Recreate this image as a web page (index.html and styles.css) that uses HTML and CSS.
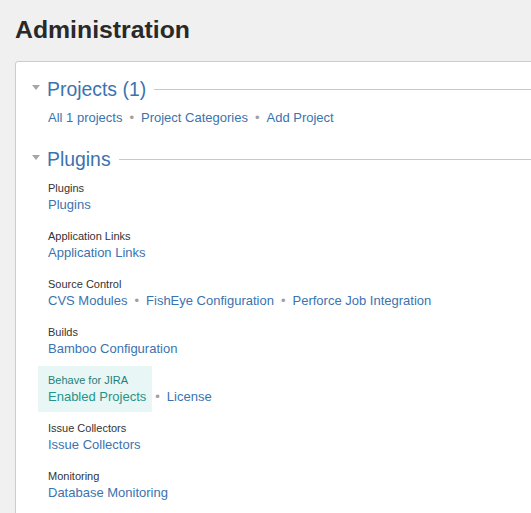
FILE: index.html
```html
<!DOCTYPE html>
<html lang="en">
<head>
<meta charset="utf-8">
<title>Administration</title>
<link rel="stylesheet" href="styles.css">
</head>
<body>
<h1 class="page-title">Administration</h1>
<div class="panel">
  <section class="admin-section">
    <h2 class="section-head"><span class="twisty"></span><span class="section-title">Projects (1)</span><span class="rule"></span></h2>
    <div class="link-row projects-links">
      <a class="link" href="#">All 1 projects</a><span class="sep">•</span><a class="link" href="#">Project Categories</a><span class="sep">•</span><a class="link" href="#">Add Project</a>
    </div>
  </section>
  <section class="admin-section plugins-section">
    <h2 class="section-head"><span class="twisty"></span><span class="section-title">Plugins</span><span class="rule"></span></h2>
    <div class="groups">
      <div class="group">
        <div class="group-main"><div class="group-label">Plugins</div><a class="link" href="#">Plugins</a></div>
      </div>
      <div class="group">
        <div class="group-main"><div class="group-label">Application Links</div><a class="link" href="#">Application Links</a></div>
      </div>
      <div class="group">
        <div class="group-main"><div class="group-label">Source Control</div><a class="link" href="#">CVS Modules</a></div>
        <div class="group-rest"><span class="sep">•</span><a class="link" href="#">FishEye Configuration</a><span class="sep">•</span><a class="link" href="#">Perforce Job Integration</a></div>
      </div>
      <div class="group">
        <div class="group-main"><div class="group-label">Builds</div><a class="link" href="#">Bamboo Configuration</a></div>
      </div>
      <div class="group">
        <div class="group-main hl"><div class="group-label">Behave for JIRA</div><a class="link" href="#">Enabled Projects</a></div>
        <div class="group-rest"><span class="sep">•</span><a class="link" href="#">License</a></div>
      </div>
      <div class="group">
        <div class="group-main"><div class="group-label">Issue Collectors</div><a class="link" href="#">Issue Collectors</a></div>
      </div>
      <div class="group">
        <div class="group-main"><div class="group-label">Monitoring</div><a class="link" href="#">Database Monitoring</a></div>
      </div>
    </div>
  </section>
</div>
</body>
</html>
```
FILE: styles.css
```css
html, body {
  margin: 0;
  padding: 0;
  overflow: hidden;
}
body {
  background: #f0f0f0;
  font-family: "Liberation Sans", Arial, sans-serif;
  color: #333;
  padding: 0 15px;
  height: 513px;
}
.page-title {
  margin: 0 0 16px 0;
  padding-top: 15px;
  font-size: 24.8px;
  line-height: 30px;
  font-weight: bold;
  color: #292929;
}
.panel {
  background: #fff;
  border: 1px solid #ccc;
  border-radius: 3px;
  margin-right: -60px;
  padding: 16px 16px 40px 16px;
}
.section-head {
  display: flex;
  align-items: center;
  margin: 0;
  height: 23px;
  font-size: 19.4px;
  line-height: 23px;
  font-weight: normal;
}
.twisty {
  width: 0;
  height: 0;
  border-left: 4.5px solid transparent;
  border-right: 4.5px solid transparent;
  border-top: 5px solid #a6a6a6;
  margin-right: 7px;
  margin-bottom: 4px;
}
.section-title {
  color: #3b73af;
  white-space: nowrap;
}
.rule {
  flex: 1;
  height: 1px;
  background: #c8c8c8;
  margin-left: 8px;
}
.link {
  color: #3b73af;
  text-decoration: none;
  font-size: 13px;
  line-height: 17px;
  white-space: nowrap;
}
.link-row {
  font-size: 13px;
  line-height: 17px;
  padding-left: 16px;
  white-space: nowrap;
}
.projects-links {
  margin-top: 8px;
}
.sep {
  color: #a0a0a0;
  font-size: 13px;
  margin: 0 7px;
}
.plugins-section {
  margin-top: 22px;
}
.groups {
  margin-top: 3px;
  padding-left: 6px;
}
.group {
  display: flex;
  align-items: flex-end;
  margin-bottom: 2px;
}
.group-main {
  padding: 6px 0 7px 10px;
}
.group-main .link {
  display: block;
}
.group-label {
  font-size: 11px;
  line-height: 16px;
  color: #333;
  white-space: nowrap;
}
.group-rest {
  padding-bottom: 7px;
  font-size: 13px;
  line-height: 17px;
  white-space: nowrap;
}
.hl {
  background: #e8f6f5;
  padding-right: 6px;
  margin-right: -4px;
}
.hl .group-label {
  color: #1f7f77;
}
.hl .link {
  color: #23958a;
}
```
